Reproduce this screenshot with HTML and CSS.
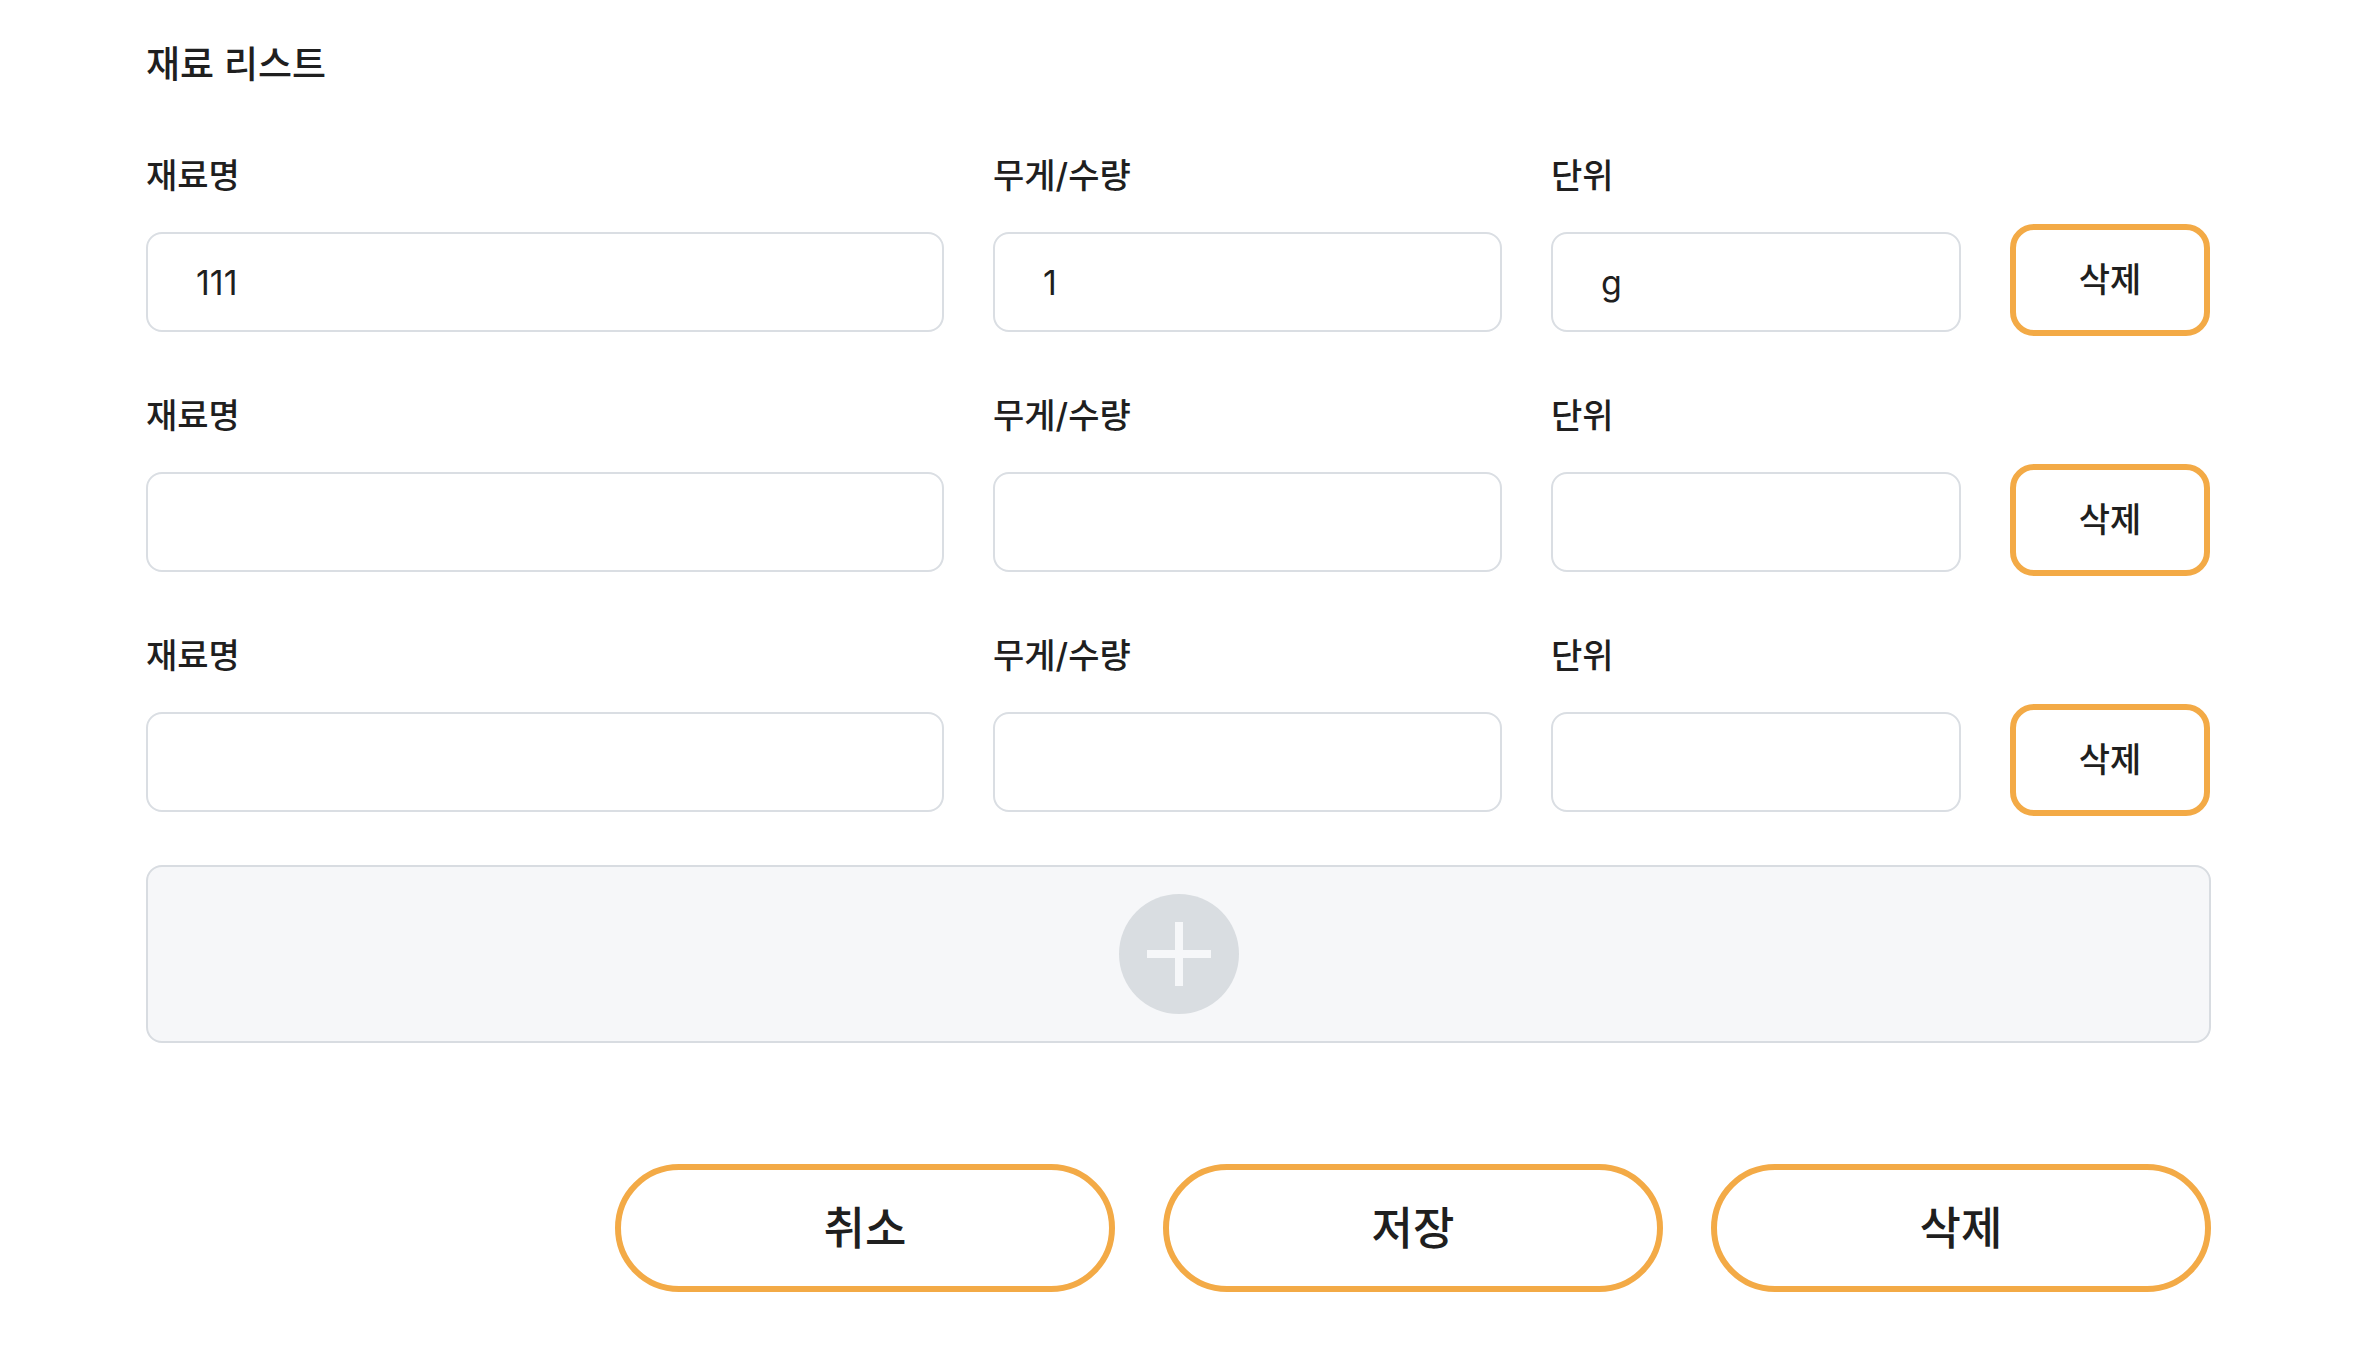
FILE: index.html
```html
<!DOCTYPE html>
<html lang="ko">
<head>
  <meta charset="UTF-8">
  <meta name="viewport" content="width=device-width, initial-scale=1.0">
  <title>재료 리스트</title>
  <link rel="stylesheet" href="styles.css">
</head>
<body>
  <main class="editor">
    <h2 class="section-title">재료 리스트</h2>

    <div class="ingredient-list">
      <div class="ingredient-row">
        <label class="field">
          <span class="field-label">재료명</span>
          <input class="field-input" type="text" value="111">
        </label>
        <label class="field">
          <span class="field-label">무게/수량</span>
          <input class="field-input" type="text" value="1">
        </label>
        <label class="field">
          <span class="field-label">단위</span>
          <input class="field-input" type="text" value="g">
        </label>
        <button class="row-delete" type="button">삭제</button>
      </div>

      <div class="ingredient-row">
        <label class="field">
          <span class="field-label">재료명</span>
          <input class="field-input" type="text">
        </label>
        <label class="field">
          <span class="field-label">무게/수량</span>
          <input class="field-input" type="text">
        </label>
        <label class="field">
          <span class="field-label">단위</span>
          <input class="field-input" type="text">
        </label>
        <button class="row-delete" type="button">삭제</button>
      </div>

      <div class="ingredient-row">
        <label class="field">
          <span class="field-label">재료명</span>
          <input class="field-input" type="text">
        </label>
        <label class="field">
          <span class="field-label">무게/수량</span>
          <input class="field-input" type="text">
        </label>
        <label class="field">
          <span class="field-label">단위</span>
          <input class="field-input" type="text">
        </label>
        <button class="row-delete" type="button">삭제</button>
      </div>
    </div>

    <!-- add a new ingredient row -->
    <button class="add-row" type="button">
      <span class="add-icon">
        <svg width="64" height="64" viewBox="0 0 64 64">
          <rect x="28" y="0" width="8" height="64" fill="#f6f7f9"/>
          <rect x="0" y="28" width="64" height="8" fill="#f6f7f9"/>
        </svg>
      </span>
    </button>

    <div class="form-actions">
      <button class="action-btn" type="button">취소</button>
      <button class="action-btn" type="button">저장</button>
      <button class="action-btn" type="button">삭제</button>
    </div>
  </main>
</body>
</html>
```

FILE: styles.css
```css
/* Global Styles */
body {
  margin: 0;
  padding: 0;
  background-color: #fff;
  color: #1f1f1f;
  font-family: Inter, "Noto Sans CJK KR", sans-serif;
}

.editor {
  width: 2065px;
  margin-left: 146px;
  padding-top: 43px;
}

.section-title {
  margin: 0 0 67px;
  font-size: 37px;
  line-height: 44px;
  font-weight: 500;
}

/* Ingredient rows */
.ingredient-list {
  display: flex;
  flex-direction: column;
  gap: 62px;
}

.ingredient-row {
  display: grid;
  grid-template-columns: 798px 509px 410px 200px;
  column-gap: 49px;
  align-items: end;
}

.field {
  display: flex;
  flex-direction: column;
  gap: 36px;
}

.field-label {
  padding-top: 2px;
  font-size: 34px;
  line-height: 40px;
  font-weight: 500;
}

.field-input {
  box-sizing: border-box;
  height: 100px;
  width: 100%;
  padding: 0 48px;
  border: 2px solid #dadee3;
  border-radius: 16px;
  background: #fff;
  font: inherit;
  font-size: 34px;
  color: #1f1f1f;
  outline: none;
}

.row-delete {
  box-sizing: border-box;
  width: 200px;
  height: 112px;
  margin-bottom: -4px;
  padding: 0 0 6px;
  border: 6px solid #f3aa46;
  border-radius: 24px;
  background: #fff;
  font: inherit;
  font-size: 34px;
  font-weight: 500;
  color: #1f1f1f;
  cursor: pointer;
}

/* Add row */
.add-row {
  box-sizing: border-box;
  display: flex;
  justify-content: center;
  align-items: center;
  width: 100%;
  height: 178px;
  margin-top: 53px;
  border: 2px solid #d8dce1;
  border-radius: 16px;
  background-color: #f6f7f9;
  cursor: pointer;
}

.add-icon {
  display: flex;
  justify-content: center;
  align-items: center;
  width: 120px;
  height: 120px;
  border-radius: 50%;
  background-color: #d9dde1;
}

/* Bottom actions */
.form-actions {
  display: flex;
  justify-content: flex-end;
  gap: 48px;
  margin-top: 121px;
}

.action-btn {
  box-sizing: border-box;
  width: 500px;
  height: 128px;
  padding: 0 0 6px;
  border: 6px solid #f3aa46;
  border-radius: 64px;
  background: #fff;
  font: inherit;
  font-size: 45px;
  font-weight: 500;
  color: #1f1f1f;
  cursor: pointer;
}
```
